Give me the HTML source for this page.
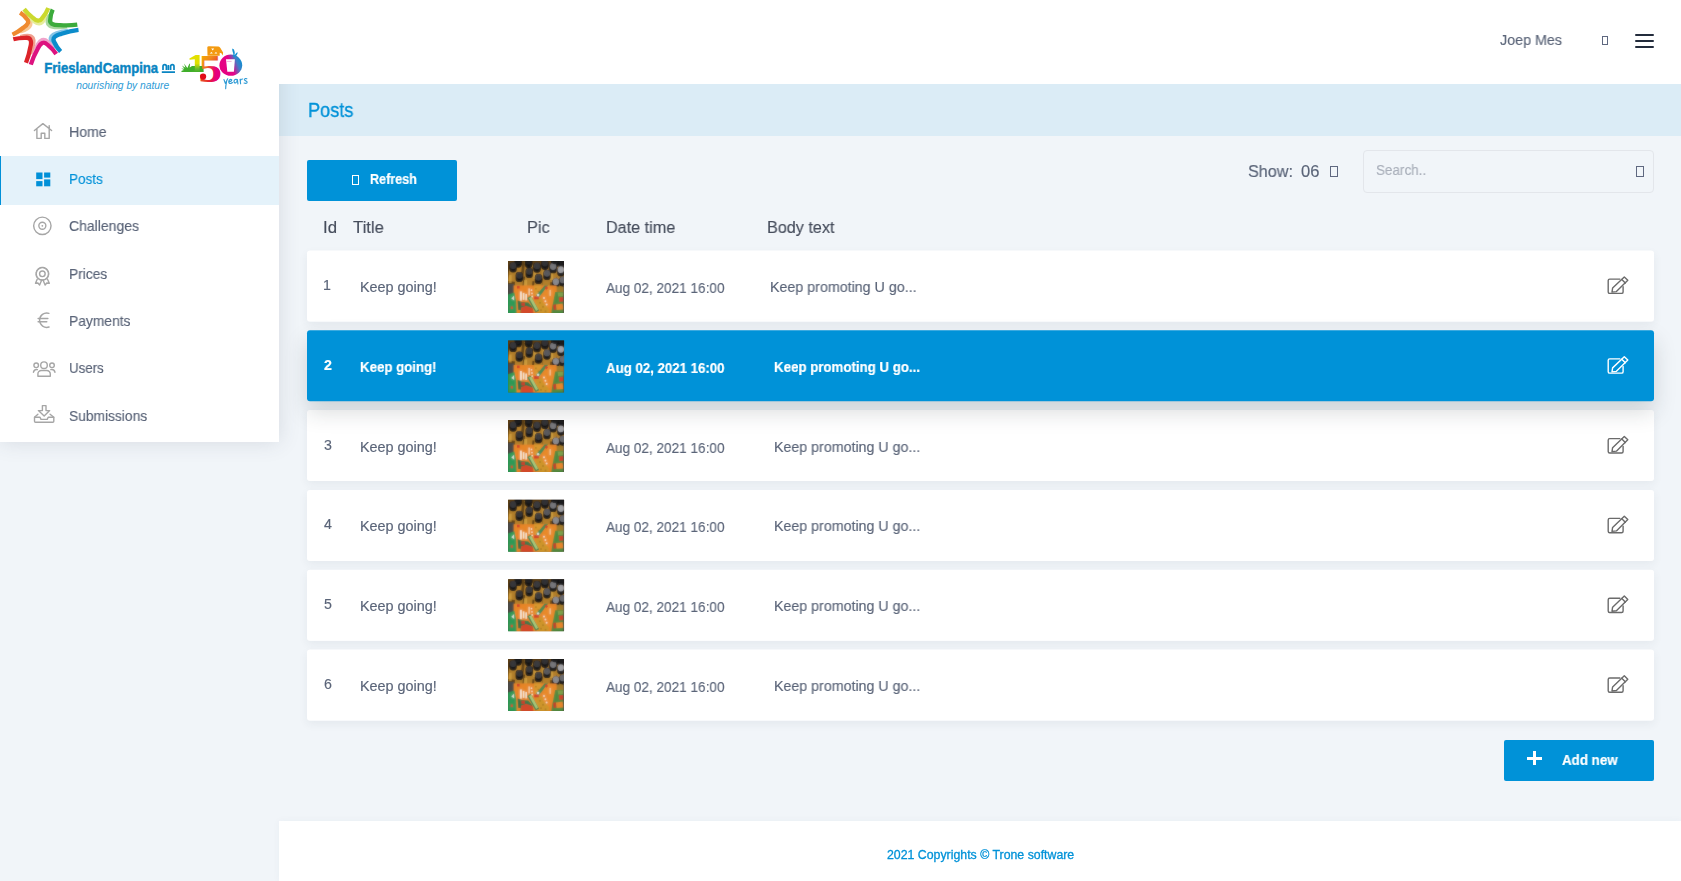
<!DOCTYPE html>
<html>
<head>
<meta charset="utf-8">
<title>Posts</title>
<style>
*{box-sizing:border-box;margin:0;padding:0}
html,body{width:1681px;height:881px;overflow:hidden}
body{font-family:"Liberation Sans",sans-serif;background:#f1f5f9;color:#5a6478;position:relative}
.abs{position:absolute}
.t{position:absolute;white-space:nowrap;line-height:1;transform-origin:0 0;will-change:transform;z-index:3}
#header{left:279px;top:0;width:1402px;height:84px;background:#fff}
#titlebar{left:279px;top:84px;width:1402px;height:52px;background:#dbecf6}
#sidebar{left:0;top:0;width:279px;height:442.4px;background:#fff;box-shadow:0 0 20px rgba(60,70,90,.15)}
#navactive{left:0;top:155.9px;width:279px;height:49px;background:#e4f2fa;border-left:1px solid #0090d8}
.btn{background:#0092d8;border-radius:2px}
.row{left:307px;width:1347px;height:71px;border-radius:3px;box-shadow:0 3px 10px rgba(40,55,75,.065)}
.row.sel{z-index:2;box-shadow:0 11px 22px rgba(30,40,50,.17)}
#footer{left:279px;top:821px;width:1402px;height:60px;background:#fff;box-shadow:0 0 8px rgba(60,70,90,.04)}
.tofu{position:absolute;border:1px solid #5f6880}
</style>
</head>
<body>
<svg width="0" height="0" style="position:absolute">
<defs>
<filter id="blur" x="-5%" y="-5%" width="110%" height="110%"><feGaussianBlur stdDeviation="0.8"/></filter>
<clipPath id="tc"><rect width="56" height="52"/></clipPath>
<g id="tcont">
<rect x="-2" y="-2" width="60" height="34" fill="#5c3f16"/>
<g fill="#b27f2c"><path d="M1.1 8.0L-0.2 20.0L7.6 21.0L8.9 9.0Z"/><path d="M7.3 17.6L6.0 29.6L13.8 30.6L15.1 18.6Z"/><path d="M6.1 3.2L4.8 15.2L12.6 16.2L13.9 4.2Z"/><path d="M16.7 3.6L15.4 15.6L23.2 16.6L24.5 4.6Z"/><path d="M17.2 13.6L15.9 25.6L23.7 26.6L25.0 14.6Z"/><path d="M25.0 8.2L23.7 20.2L31.5 21.2L32.8 9.2Z"/><path d="M26.5 19.6L25.2 31.6L33.0 32.6L34.3 20.6Z"/><path d="M32.9 5.4L31.6 17.4L39.4 18.4L40.7 6.4Z"/><path d="M35.0 15.6L33.7 27.6L41.5 28.6L42.8 16.6Z"/><path d="M41.1 8.8L39.8 20.8L47.6 21.8L48.9 9.8Z"/><path d="M42.8 3.2L41.5 15.2L49.3 16.2L50.6 4.2Z"/><path d="M43.9 24.0L42.6 36.0L50.4 37.0L51.7 25.0Z"/><path d="M48.9 12.0L47.6 24.0L55.4 25.0L56.7 13.0Z"/><path d="M49.7 3.4L48.4 15.4L56.2 16.4L57.5 4.4Z"/><path d="M50.9 22.2L49.6 34.2L57.4 35.2L58.7 23.2Z"/></g>
<g fill="#d9a843" opacity=".7"><path d="M6.200 1l1.200-1 .8 3.500zM16.200 2l1.400-1.600 1 4zM23.300 5l1.400-2 .8 3.600zM33 3l1.200-2 .6 3.400zM1 14h2.500v8h-3zM16 19h3v6h-3.600zM25.600 12h2.400v6h-2.800zM34.500 9.500h2v5h-2.400zM42.500 12h2.500v7h-3z"/></g>
<g fill="#141416"><rect x="1.3" y="1.6" width="7.4" height="10" rx="3.4"/><rect x="7.5" y="11.2" width="7.4" height="10" rx="3.4"/><rect x="6.3" y="-3.2" width="7.4" height="10" rx="3.4"/><rect x="16.9" y="-2.8" width="7.4" height="10" rx="3.4"/><rect x="17.4" y="7.2" width="7.4" height="10" rx="3.4"/><rect x="25.2" y="1.8" width="7.4" height="10" rx="3.4"/><rect x="26.7" y="13.2" width="7.4" height="10" rx="3.4"/><rect x="33.1" y="-1.0" width="7.4" height="10" rx="3.4"/><rect x="35.2" y="9.2" width="7.4" height="10" rx="3.4"/><rect x="41.3" y="2.4" width="7.4" height="10" rx="3.4"/><rect x="43.0" y="-3.2" width="7.4" height="10" rx="3.4"/><rect x="44.1" y="17.6" width="7.4" height="10" rx="3.4"/><rect x="49.1" y="5.6" width="7.4" height="10" rx="3.4"/><rect x="49.9" y="-3.0" width="7.4" height="10" rx="3.4"/><rect x="51.1" y="15.8" width="7.4" height="10" rx="3.4"/></g>
<ellipse cx="5.0" cy="4.8" rx="3.2" ry="3.4" fill="#37373a"/><ellipse cx="11.2" cy="14.4" rx="3.2" ry="3.4" fill="#343437"/><ellipse cx="10.0" cy="0.0" rx="3.2" ry="3.4" fill="#1c1c1e"/><ellipse cx="20.6" cy="0.4" rx="3.2" ry="3.4" fill="#202022"/><ellipse cx="21.1" cy="10.4" rx="3.2" ry="3.4" fill="#38383b"/><ellipse cx="28.9" cy="5.0" rx="3.2" ry="3.4" fill="#3b3b3e"/><ellipse cx="30.4" cy="16.4" rx="3.2" ry="3.4" fill="#3d3d40"/><ellipse cx="36.8" cy="2.2" rx="3.2" ry="3.4" fill="#323235"/><ellipse cx="38.9" cy="12.4" rx="3.2" ry="3.4" fill="#5a5a5e"/><ellipse cx="45.0" cy="5.6" rx="3.2" ry="3.4" fill="#77777b"/><ellipse cx="46.7" cy="0.0" rx="3.2" ry="3.4" fill="#1c1c1e"/><ellipse cx="47.8" cy="20.8" rx="3.2" ry="3.4" fill="#8a8a8e"/><ellipse cx="52.8" cy="8.8" rx="3.2" ry="3.4" fill="#a2a2a6"/><ellipse cx="53.6" cy="0.2" rx="3.2" ry="3.4" fill="#1c1c1e"/><ellipse cx="54.8" cy="19.0" rx="3.2" ry="3.4" fill="#6c6c70"/>
<rect x="-1" y="23" width="7.200" height="11" fill="#4b4a47"/>
<rect x="46.500" y="25.500" width="8" height="6" fill="#a37c2c"/>
<rect x="5.500" y="24.500" width="43" height="29" fill="#e78528"/>
<polygon points="-1,34 6.200,31.500 8,40 8.500,53 -1,53" fill="#2f9a56"/>
<polygon points="3.200,37.500 6,34.600 6.100,39.600" fill="#e6e2da"/>
<rect x="2.600" y="45.500" width="2.200" height="2.600" fill="#d8502c"/>
<polygon points="9.500,39.500 12.500,40.500 13,49 10.200,49" fill="#2f6e48"/>
<polygon points="12.500,41 20,41.700 24,46 25,53 12.500,53" fill="#2f7a4c"/>
<polygon points="12.900,46.500 18,44.800 24.500,47 25.500,53 12.900,53" fill="#d3492a"/>
<rect x="13.200" y="41.700" width="3.600" height="3.300" fill="#d03a2a"/>
<rect x="8.900" y="25" width="2.600" height="2.600" fill="#d03a2a"/>
<polygon points="25.700,24.500 32.500,24.500 33,30 31,34.800 26.500,34.800" fill="#d9982e"/>
<polygon points="27.500,38 36,37 41,46 41,53 30,53 28.500,45" fill="#cf962c"/>
<g fill="#9c6e22" opacity=".6"><rect x="27" y="27" width="1.600" height="1.600"/><rect x="29.500" y="30" width="1.600" height="1.600"/><rect x="31" y="41" width="1.800" height="1.800"/><rect x="34" y="45" width="1.800" height="1.800"/><rect x="32" y="48.500" width="1.800" height="1.800"/><rect x="37" y="42" width="1.600" height="1.600"/><rect x="36.500" y="49.500" width="1.800" height="1.800"/></g>
<polygon points="28,34.500 36.500,24.500 40,24.500 30.600,36.500" fill="#3c8a54"/>
<polygon points="19.200,37 22.500,35.200 31,49.800 27.500,51.500" fill="#3e7e50"/>
<polygon points="20.800,37 23.300,36.200 30,48.500 28,50" fill="#a9ca7c"/>
<rect x="26" y="35.600" width="4.700" height="2.800" fill="#cf3c2c"/>
<circle cx="30" cy="34.200" r="1.300" fill="#e4e6e0"/>
<polygon points="33.500,34.600 37.100,28.200 40.700,24.500 45.300,28.900 47.100,34.600 44.300,45.300 40.700,48.200 35,41.700" fill="#e88a2c"/>
<polygon points="36.400,27 38.200,25.200 40,27 38.200,28.800" fill="#d23c2c"/>
<polygon points="47.100,31 56,31 56,53 43,53 44.300,45.300" fill="#4f8a40"/>
<polygon points="49.500,31.500 55.500,31.500 55,35 50,35.600" fill="#7fa04a"/>
<polygon points="50.700,36.400 55.200,36 55.400,40.700 51.200,41.200" fill="#d2402c"/>
<polygon points="47.800,43.500 54.500,42.600 55.500,48.500 48.500,49" fill="#e6862c"/>
<polygon points="45,44 47.600,43 48,48.600 45.600,49.400" fill="#c83a2a"/>
<g fill="#f4e6d6"><rect x="11.800" y="30.500" width="2" height="9.300"/><rect x="14.600" y="32" width="1.800" height="7"/><rect x="17.200" y="33" width="1.700" height="6.500"/><rect x="20.400" y="27.500" width="1.200" height="7"/><circle cx="23.400" cy="29.300" r=".9"/><circle cx="23.900" cy="32.500" r=".9"/><circle cx="24.100" cy="35.600" r=".9"/><circle cx="35.900" cy="37.100" r="1"/><circle cx="37.300" cy="40.300" r="1"/><circle cx="38.500" cy="43.500" r="1"/><rect x="41.500" y="29" width="1" height="6"/></g>
<rect x="55.200" y="24" width="1" height="28" fill="#5a5a58"/>
</g>
<symbol id="thumb" viewBox="0 0 56 52">
<g clip-path="url(#tc)">
<rect width="56" height="52" fill="#4a3313"/>
<use href="#tcont" filter="url(#blur)"/>
<use href="#tcont" opacity=".45"/>
</g>
</symbol>
<symbol id="edit" viewBox="0 0 24 22">
<path d="M14.6 4.9H4.4a1.5 1.5 0 0 0-1.5 1.5V17.7a1.5 1.5 0 0 0 1.5 1.5H16.3a1.5 1.5 0 0 0 1.5-1.5V12.6"/>
<path d="M6.7 17.9L7.3 13.9 19 2.7 22.5 6.1 11.1 17.4Z"/>
<path d="M16.5 5.2l3.5 3.5"/>
</symbol>
</defs>
</svg>
<div class="abs" id="titlebar"></div>
<div class="abs" id="footer"></div>
<div class="abs" id="sidebar"></div>
<div class="abs" id="header"></div>
<div class="abs" id="navactive"></div>
<svg class="abs" style="left:0;top:0" width="279" height="108" viewBox="0 0 279 108">
<defs>
<linearGradient id="g150" x1="0" y1="0" x2="1" y2="0"><stop offset="0" stop-color="#c7d400"/><stop offset="0.18" stop-color="#f6c400"/><stop offset="0.38" stop-color="#f08a1c"/><stop offset="0.55" stop-color="#e5243b"/><stop offset="0.72" stop-color="#d6187f"/><stop offset="0.88" stop-color="#2a8fd0"/><stop offset="1" stop-color="#1aa0dc"/></linearGradient>
</defs>
<g id="star" fill="none" stroke-width="4.3" stroke-linecap="butt" stroke-linejoin="round">
<path d="M25.4 14.9Q38.9 26.6 20.2 32.1" stroke="#f8c998" stroke-width="3"/>
<path d="M28.0 15.8Q41.2 33.0 46.7 14.6" stroke="#e6ec9a" stroke-width="3"/>
<path d="M49.3 14.8Q40.3 31.3 67.0 26.9" stroke="#a9d7a0" stroke-width="3"/>
<path d="M67.9 30.2Q40.3 33.4 55.3 47.3" stroke="#86c4e6" stroke-width="3"/>
<path d="M52.6 47.2Q41.3 28.0 33.0 54.6" stroke="#f0a3cb" stroke-width="3"/>
<path d="M30.5 54.0Q41.3 30.4 20.2 36.4" stroke="#f0a18f" stroke-width="3"/>
<path d="M20.1 12.7Q24.0 15.1 26.6 18.8Q30.9 22.8 23.6 27.5Q18.5 31.8 12.5 34.6" stroke="#ef8a2f"/>
<path d="M24.1 9.1Q27.9 14.1 33.0 17.9Q39.0 23.8 42.7 17.4Q46.3 13.1 48.3 7.9" stroke="#cbd92e"/>
<path d="M52.7 9.5Q50.6 14.1 50.3 19.1Q48.6 25.5 60.1 25.1Q68.7 25.8 77.3 24.6" stroke="#3cab3c"/>
<path d="M78.5 29.8Q69.9 30.9 61.6 33.8Q50.4 36.5 54.5 42.5Q56.8 47.6 60.6 51.6" stroke="#0b8ccb"/>
<path d="M56.2 54.0Q52.6 48.8 47.7 44.9Q42.0 38.8 37.5 49.2Q33.3 56.6 30.8 64.7" stroke="#dd127f"/>
<path d="M26.0 62.8Q29.0 55.3 30.3 47.2Q33.1 36.9 25.2 37.8Q19.1 37.7 13.3 39.3" stroke="#dc2329"/>
</g>
<text x="44.2" y="72.8" font-family="Liberation Sans, sans-serif" font-weight="bold" font-size="15.4" fill="#0a85c2" stroke="#0a85c2" stroke-width=".45" textLength="114" lengthAdjust="spacingAndGlyphs">FrieslandCampina</text>
<g fill="none" stroke="#0a85c2" stroke-width="1.7"><path d="M163 70v-3.600a1.700 1.700 0 0 1 3.400 0v3.600M168.400 65v5M170.600 70v-3.600a1.700 1.700 0 0 1 3.400 0v3.600M161.800 72.200h13.200"/></g>
<text x="76.2" y="89.2" font-family="Liberation Sans, sans-serif" font-style="italic" font-size="11.5" fill="#2d9bd6" textLength="93" lengthAdjust="spacingAndGlyphs">nourishing by nature</text>
<defs>
<linearGradient id="g1" x1="0" y1="0" x2="0" y2="1"><stop offset="0" stop-color="#e4e000"/><stop offset="0.5" stop-color="#dfe000"/><stop offset="0.8" stop-color="#6cbb2a"/><stop offset="1" stop-color="#3fae2a"/></linearGradient>
<linearGradient id="g5" x1="0" y1="0" x2="0.55" y2="1"><stop offset="0" stop-color="#efd800"/><stop offset="0.22" stop-color="#f5a800"/><stop offset="0.42" stop-color="#f08a1c"/><stop offset="0.62" stop-color="#ea4a2a"/><stop offset="1" stop-color="#e20d18"/></linearGradient>
<linearGradient id="g5b" x1="0" y1="0" x2="1" y2="0"><stop offset="0.35" stop-color="#e6007e" stop-opacity="0"/><stop offset="0.75" stop-color="#e6007e"/></linearGradient>
<linearGradient id="g0" x1="0" y1="0.65" x2="1" y2="0.3"><stop offset="0" stop-color="#e6007e"/><stop offset="0.5" stop-color="#e4058a"/><stop offset="0.78" stop-color="#3f7fc8"/><stop offset="1" stop-color="#0a90d2"/></linearGradient>
<clipPath id="c5b"><rect x="198" y="62" width="26" height="22"/></clipPath>
</defs>
<path d="M181.3 72l.4-1.2 2.2-.9-2.6-1.3 3 .2-2.4-3.4 3.6 2.4-1.5-4.2 3.4 4.5 1.6-3.6 1.1-1.3-.4 4.4 2.3-1.6h11.6v6z" fill="#3fae2a"/>
<path d="M189.4 58.4l6.2-3.4h4v15.8l3.6.7v.6h-11.6v-.7l3.2-.8v-11.4l-5.2.6z" fill="url(#g1)"/>
<path d="M207.3 47.2q.2-1 1.8-.9l9.4.3q1.2.1 1.9 1.4l2.7 4.6-.3 2.9-1.4-2.3-1.7-.4v3h-12.2z" fill="#f39a10"/>
<path d="M211.2 48.4h3l-1.5 2.2zM209.6 53.4l2-1.3 1.2 1.3zM214.4 53.6l1.6-1.6 1.4 1.6z" fill="#fff"/>
<text x="198.6" y="81.8" font-family="Liberation Serif, serif" font-weight="bold" font-size="40.5" fill="url(#g5)" textLength="23.4" lengthAdjust="spacingAndGlyphs">5</text>
<text x="198.6" y="81.8" font-family="Liberation Serif, serif" font-weight="bold" font-size="40.5" fill="url(#g5b)" textLength="23.4" lengthAdjust="spacingAndGlyphs" clip-path="url(#c5b)">5</text>
<circle cx="203.1" cy="76.5" r="3.1" fill="#e20d18"/>
<ellipse cx="230.8" cy="65.2" rx="11.4" ry="10.6" fill="url(#g0)"/>
<path d="M226 59.2h8.9l-1 12.6h-6.6z" fill="#fff"/>
<path d="M226.6 61.4h5" stroke="#f0a0cf" stroke-width=".8"/>
<path d="M233.2 56.6q.6-2.6-.6-5.2-.7-1.6-.2-2.8 2 .4 2.3 3.4.2 1.6-.2 3.6 1.2-2.6 2.9-3.6.6 1.8-.9 3.4-1.5 1.4-2.3 2z" fill="#1592d3"/>
<g fill="none" stroke="#2f9bd5" stroke-width="1.15" stroke-linecap="round" stroke-linejoin="round">
<path d="M224 79.6l1.3 3.8 2.4-4.6M226.6 81.4q-1 5-.9 7.200"/>
<path d="M229.3 81.6q2.600-.2 2.400-1.900-1.800-1.100-2.900 1.300-.4 2.400 1.800 2.500 1-.1 1.800-1"/>
<path d="M237.200 79.600q-2.600-.900-3.200 1.500-.1 1.900 1.600 1.800 1.400-.4 1.800-3.400l.5 4.400"/>
<path d="M240.100 79.200l.5 4.600M240.300 80.800q.8-2 2.400-1.800"/>
<path d="M246.800 78.800q-1.800-.8-2.300.6 0 1 1.400 1.500 1.700.8 1 2-.9 1-2.800.1"/>
</g>
</svg>
<svg class="abs" style="left:0;top:108px" width="70" height="334" viewBox="0 108 70 334" fill="none" stroke="#a6a6a6" stroke-width="1.4" stroke-linecap="round" stroke-linejoin="round">
<!-- home -->
<path d="M34.4 130.5L42.9 123.6 51.6 130.5M49.2 125.6V128.5M36.9 128.8V138.4H41.2V133.3H44.8V138.4H49.2V128.6"/>
<!-- posts -->
<g fill="#0090d8" stroke="none"><rect x="36.2" y="172.5" width="6.3" height="6.6"/><rect x="44.1" y="172.5" width="6.2" height="5.1"/><rect x="36.2" y="181.1" width="6.3" height="5.2"/><rect x="44.1" y="179.4" width="6.2" height="6.9"/></g>
<!-- challenges -->
<circle cx="42.35" cy="225.8" r="8.7"/><circle cx="42.35" cy="225.8" r="3.5"/><circle cx="42.35" cy="225.8" r="0.9" fill="#a3a3a3" stroke="none"/>
<!-- prices -->
<circle cx="42.35" cy="273.8" r="6.45" stroke-width="1.2" stroke-dasharray="1.5 0.75"/><circle cx="42.35" cy="273.8" r="6.0" stroke-width="1.1"/><circle cx="42.35" cy="273.8" r="2.8"/>
<path d="M37.2 279.2L35.5 283.3 37.9 283 39.6 285 41.6 280.2M47.5 279.2L49.3 283.3 46.8 283 45.1 285 43.1 280.2"/>
<!-- euro -->
<path d="M48.9 313.3A7.2 7.2 0 1 0 49.1 327M38.1 318.45H47.9M38.1 321.8H46.8"/>
<!-- users -->
<circle cx="44" cy="365.2" r="3.3"/><circle cx="36.2" cy="365.3" r="2.3"/><circle cx="52" cy="365.3" r="2.3"/>
<path d="M37.9 376.3V374A3.5 3.5 0 0 1 41.4 370.5H46.8A3.5 3.5 0 0 1 50.3 374V376.3Z"/>
<path d="M33.4 372.2A3.6 3.6 0 0 1 37.4 369.6M50.8 369.6A3.6 3.6 0 0 1 55 372.2"/>
<!-- submissions -->
<path d="M42.4 405.6H46V410.6H49.7L44.15 416 38.4 410.6H42.4Z"/>
<path d="M37.9 414.3L34.5 417.3V421.2A1 1 0 0 0 35.5 422.2H52.8A1 1 0 0 0 53.8 421.2V417.3L50.1 414.3"/>
<path d="M34.6 417.2H40L41 419.35H47.2L48.2 417.2H53.7"/>
</svg>

<!-- header right -->
<div class="tofu" style="left:1602px;top:36px;width:6px;height:9px"></div>
<div class="abs" style="left:1635px;top:34px;width:19px;height:2px;background:#232c3c;border-radius:1px"></div>
<div class="abs" style="left:1635px;top:40px;width:19px;height:2px;background:#232c3c;border-radius:1px"></div>
<div class="abs" style="left:1635px;top:46px;width:19px;height:2px;background:#232c3c;border-radius:1px"></div>
<!-- toolbar -->
<div class="abs btn" style="left:307px;top:160px;width:150px;height:40.8px"></div>
<div class="tofu" style="left:352px;top:175px;width:7px;height:10px;border-color:#fff"></div>
<div class="tofu" style="left:1330px;top:166px;width:8px;height:11px"></div>
<div class="abs" style="left:1363px;top:149.5px;width:290.5px;height:43px;border:1px solid #e3e6eb;border-radius:4px"></div>
<div class="tofu" style="left:1636px;top:166px;width:8px;height:11px"></div>
<!-- rows -->
<div class="abs row" style="top:250.5px"></div>
<div class="abs row sel" style="top:330.2px"></div>
<div class="abs row" style="top:410.0px"></div>
<div class="abs row" style="top:489.9px"></div>
<div class="abs row" style="top:569.8px"></div>
<div class="abs row" style="top:649.6px"></div>
<svg class="abs" style="left:0;top:0;z-index:1" width="1681" height="881" viewBox="0 0 1681 881">
<rect x="307" y="250.50" width="1347" height="71" rx="3" fill="#fff"/>
<rect x="307" y="410.00" width="1347" height="71" rx="3" fill="#fff"/>
<rect x="307" y="489.90" width="1347" height="71" rx="3" fill="#fff"/>
<rect x="307" y="569.75" width="1347" height="71" rx="3" fill="#fff"/>
<rect x="307" y="649.60" width="1347" height="71" rx="3" fill="#fff"/>
</svg>
<svg class="abs" style="left:0;top:0;z-index:2" width="1681" height="881" viewBox="0 0 1681 881">
<rect x="307" y="330.20" width="1347" height="71" rx="3" fill="#0092d8"/>
<use href="#thumb" x="508.1" y="260.90" width="56" height="52"/>
<use href="#edit" x="1605.3" y="274.20" width="24" height="22" fill="none" stroke="#6b6b6b" stroke-width="1.4" stroke-linejoin="round" stroke-linecap="round"/>
<use href="#thumb" x="508.1" y="340.50" width="56" height="52"/>
<use href="#edit" x="1605.3" y="353.97" width="24" height="22" fill="none" stroke="#fff" stroke-width="1.4" stroke-linejoin="round" stroke-linecap="round"/>
<use href="#thumb" x="508.1" y="420.10" width="56" height="52"/>
<use href="#edit" x="1605.3" y="433.74" width="24" height="22" fill="none" stroke="#6b6b6b" stroke-width="1.4" stroke-linejoin="round" stroke-linecap="round"/>
<use href="#thumb" x="508.1" y="499.70" width="56" height="52"/>
<use href="#edit" x="1605.3" y="513.51" width="24" height="22" fill="none" stroke="#6b6b6b" stroke-width="1.4" stroke-linejoin="round" stroke-linecap="round"/>
<use href="#thumb" x="508.1" y="579.30" width="56" height="52"/>
<use href="#edit" x="1605.3" y="593.28" width="24" height="22" fill="none" stroke="#6b6b6b" stroke-width="1.4" stroke-linejoin="round" stroke-linecap="round"/>
<use href="#thumb" x="508.1" y="658.90" width="56" height="52"/>
<use href="#edit" x="1605.3" y="673.05" width="24" height="22" fill="none" stroke="#6b6b6b" stroke-width="1.4" stroke-linejoin="round" stroke-linecap="round"/>
</svg>
<!-- add new -->
<div class="abs btn" style="left:1504px;top:740.2px;width:150px;height:41px"></div>
<div class="abs" style="left:1527px;top:756.6px;width:15px;height:3px;background:#fff"></div>
<div class="abs" style="left:1533px;top:751px;width:3px;height:14px;background:#fff"></div>
<!-- text -->
<div class="t" style="left:68.82px;top:125.00px;font-size:14.5px;color:#5a6478;-webkit-text-stroke:0.15px;transform:scaleX(0.9757);">Home</div>
<div class="t" style="left:68.87px;top:172.00px;font-size:14.5px;color:#0092d8;-webkit-text-stroke:0.15px;transform:scaleX(0.9311);">Posts</div>
<div class="t" style="left:69.40px;top:219.00px;font-size:14.5px;color:#5a6478;-webkit-text-stroke:0.15px;transform:scaleX(0.9654);">Challenges</div>
<div class="t" style="left:68.85px;top:267.00px;font-size:14.5px;color:#5a6478;-webkit-text-stroke:0.15px;transform:scaleX(0.9479);">Prices</div>
<div class="t" style="left:68.85px;top:314.00px;font-size:14.5px;color:#5a6478;-webkit-text-stroke:0.15px;transform:scaleX(0.9522);">Payments</div>
<div class="t" style="left:68.58px;top:361.00px;font-size:14.5px;color:#5a6478;-webkit-text-stroke:0.15px;transform:scaleX(0.9177);">Users</div>
<div class="t" style="left:69.10px;top:409.00px;font-size:14.5px;color:#5a6478;-webkit-text-stroke:0.15px;transform:scaleX(0.9506);">Submissions</div>
<div class="t" style="left:1499.70px;top:33.00px;font-size:14.5px;color:#5a6478;-webkit-text-stroke:0.15px;transform:scaleX(0.9870);">Joep Mes</div>
<div class="t" style="left:307.84px;top:100.00px;font-size:20px;color:#0092d8;-webkit-text-stroke:0.35px;transform:scaleX(0.9068);">Posts</div>
<div class="t" style="left:370.00px;top:172.00px;font-size:14px;color:#fff;font-weight:bold;-webkit-text-stroke:0.2px;transform:scaleX(0.8996);">Refresh</div>
<div class="t" style="left:1247.50px;top:163.00px;font-size:17px;color:#5a6478;-webkit-text-stroke:0.15px;transform:scaleX(0.9522);">Show:</div>
<div class="t" style="left:1300.80px;top:163.00px;font-size:16.2px;color:#5a6478;-webkit-text-stroke:0.15px;transform:scaleX(1.0221);">06</div>
<div class="t" style="left:1376.30px;top:163.00px;font-size:14.4px;color:#a9afba;-webkit-text-stroke:0.15px;transform:scaleX(0.9374);">Search..</div>
<div class="t" style="left:322.92px;top:220.00px;font-size:16.8px;color:#464d5c;-webkit-text-stroke:0.15px;transform:scaleX(0.9793);">Id</div>
<div class="t" style="left:352.50px;top:220.00px;font-size:16.8px;color:#464d5c;-webkit-text-stroke:0.15px;transform:scaleX(0.9920);">Title</div>
<div class="t" style="left:527.13px;top:220.00px;font-size:16.8px;color:#464d5c;-webkit-text-stroke:0.15px;transform:scaleX(0.9717);">Pic</div>
<div class="t" style="left:606.44px;top:220.00px;font-size:16.8px;color:#464d5c;-webkit-text-stroke:0.15px;transform:scaleX(0.9648);">Date time</div>
<div class="t" style="left:767.24px;top:220.00px;font-size:16.8px;color:#464d5c;-webkit-text-stroke:0.15px;transform:scaleX(0.9640);">Body text</div>
<div class="t" style="left:322.70px;top:278.00px;font-size:14.2px;color:#5a6478;-webkit-text-stroke:0.15px;">1</div>
<div class="t" style="left:359.70px;top:280.00px;font-size:14.4px;color:#5a6478;-webkit-text-stroke:0.15px;">Keep going!</div>
<div class="t" style="left:605.50px;top:281.00px;font-size:14.4px;color:#5a6478;-webkit-text-stroke:0.15px;transform:scaleX(0.9433);">Aug 02, 2021 16:00</div>
<div class="t" style="left:769.81px;top:280.00px;font-size:14.4px;color:#5a6478;-webkit-text-stroke:0.15px;transform:scaleX(0.9905);">Keep promoting U go...</div>
<div class="t" style="left:324.30px;top:358.00px;font-size:14.2px;color:#fff;font-weight:bold;-webkit-text-stroke:0.2px;">2</div>
<div class="t" style="left:359.70px;top:360.00px;font-size:14.4px;color:#fff;font-weight:bold;-webkit-text-stroke:0.2px;transform:scaleX(0.9205);">Keep going!</div>
<div class="t" style="left:605.50px;top:361.00px;font-size:14.4px;color:#fff;font-weight:bold;-webkit-text-stroke:0.2px;transform:scaleX(0.9201);">Aug 02, 2021 16:00</div>
<div class="t" style="left:773.80px;top:360.00px;font-size:14.4px;color:#fff;font-weight:bold;-webkit-text-stroke:0.2px;transform:scaleX(0.9225);">Keep promoting U go...</div>
<div class="t" style="left:324.30px;top:438.00px;font-size:14.2px;color:#5a6478;-webkit-text-stroke:0.15px;">3</div>
<div class="t" style="left:359.70px;top:440.00px;font-size:14.4px;color:#5a6478;-webkit-text-stroke:0.15px;">Keep going!</div>
<div class="t" style="left:605.50px;top:441.00px;font-size:14.4px;color:#5a6478;-webkit-text-stroke:0.15px;transform:scaleX(0.9433);">Aug 02, 2021 16:00</div>
<div class="t" style="left:773.61px;top:440.00px;font-size:14.4px;color:#5a6478;-webkit-text-stroke:0.15px;transform:scaleX(0.9884);">Keep promoting U go...</div>
<div class="t" style="left:324.30px;top:517.00px;font-size:14.2px;color:#5a6478;-webkit-text-stroke:0.15px;">4</div>
<div class="t" style="left:359.70px;top:519.00px;font-size:14.4px;color:#5a6478;-webkit-text-stroke:0.15px;">Keep going!</div>
<div class="t" style="left:605.50px;top:520.00px;font-size:14.4px;color:#5a6478;-webkit-text-stroke:0.15px;transform:scaleX(0.9433);">Aug 02, 2021 16:00</div>
<div class="t" style="left:773.61px;top:519.00px;font-size:14.4px;color:#5a6478;-webkit-text-stroke:0.15px;transform:scaleX(0.9884);">Keep promoting U go...</div>
<div class="t" style="left:324.30px;top:597.00px;font-size:14.2px;color:#5a6478;-webkit-text-stroke:0.15px;">5</div>
<div class="t" style="left:359.70px;top:599.00px;font-size:14.4px;color:#5a6478;-webkit-text-stroke:0.15px;">Keep going!</div>
<div class="t" style="left:605.50px;top:600.00px;font-size:14.4px;color:#5a6478;-webkit-text-stroke:0.15px;transform:scaleX(0.9433);">Aug 02, 2021 16:00</div>
<div class="t" style="left:773.61px;top:599.00px;font-size:14.4px;color:#5a6478;-webkit-text-stroke:0.15px;transform:scaleX(0.9884);">Keep promoting U go...</div>
<div class="t" style="left:324.30px;top:677.00px;font-size:14.2px;color:#5a6478;-webkit-text-stroke:0.15px;">6</div>
<div class="t" style="left:359.70px;top:679.00px;font-size:14.4px;color:#5a6478;-webkit-text-stroke:0.15px;">Keep going!</div>
<div class="t" style="left:605.50px;top:680.00px;font-size:14.4px;color:#5a6478;-webkit-text-stroke:0.15px;transform:scaleX(0.9433);">Aug 02, 2021 16:00</div>
<div class="t" style="left:773.61px;top:679.00px;font-size:14.4px;color:#5a6478;-webkit-text-stroke:0.15px;transform:scaleX(0.9884);">Keep promoting U go...</div>
<div class="t" style="left:1562.30px;top:753.00px;font-size:14px;color:#fff;font-weight:bold;-webkit-text-stroke:0.2px;transform:scaleX(0.9531);">Add new</div>
<div class="t" style="left:886.75px;top:849.00px;font-size:12.2px;color:#0092d8;-webkit-text-stroke:0.3px;transform:scaleX(1.0113);">2021 Copyrights © Trone software</div>
</body>
</html>
